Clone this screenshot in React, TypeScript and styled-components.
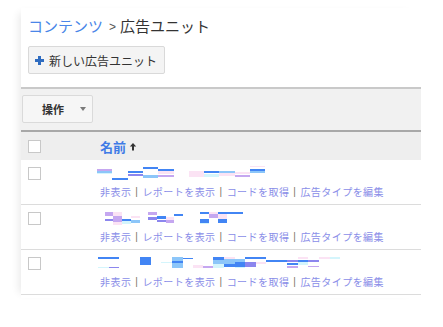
import React from "react";
import styled, { createGlobalStyle } from "styled-components";

const GlobalStyle = createGlobalStyle`
  body {
    margin: 0;
    background: #ffffff;
    font-family: "Noto Sans CJK JP", "Noto Sans", sans-serif;
  }
`;

const Page = styled.div`
  padding: 8px 22px 30px 21px;
`;
const Panel = styled.div`
  background: #ffffff;
  box-shadow: -7px 0 8px -5px rgba(0, 0, 0, 0.09);
  padding-bottom: 3px;
`;
const Top = styled.div`
  padding: 8px 7px 0;
`;
const Breadcrumb = styled.div`
  display: flex;
  align-items: center;
  height: 20px;
  font-size: 15px;
  line-height: 20px;
  color: #333333;
`;
const CrumbLink = styled.a`
  color: #4a86e8;
  text-decoration: none;
`;
const CrumbSep = styled.span`
  font-family: "Liberation Sans", sans-serif;
  font-size: 12px;
  color: #555555;
  margin: 1px 4px 0 6px;
`;
const NewButton = styled.button`
  display: flex;
  align-items: center;
  gap: 5px;
  height: 28px;
  margin-top: 10px;
  padding: 0 7px 0 6px;
  background: #f4f4f4;
  border: 1px solid #d9d9d9;
  border-radius: 2px;
  font-family: inherit;
  font-size: 12px;
  color: #333333;
`;
const Toolbar = styled.div`
  margin-top: 13px;
  height: 35px;
  padding: 6px 1px 0;
  background: #f1f1f1;
  border-top: 2px solid #c9c9c9;
  border-bottom: 2px solid #a8a8a8;
`;
const ActionButton = styled.button`
  display: flex;
  align-items: center;
  width: 71px;
  height: 28px;
  padding: 0 0 0 19px;
  background: #f6f6f6;
  border: 1px solid #dadada;
  border-radius: 2px;
  font-family: inherit;
  font-size: 11px;
  font-weight: bold;
  color: #333333;
`;
const Caret = styled.span`
  margin-left: 16px;
  width: 0;
  height: 0;
  border-left: 3.5px solid transparent;
  border-right: 3.5px solid transparent;
  border-top: 4px solid #7a7a7a;
`;
const Row = styled.div<{ $head?: boolean }>`
  display: grid;
  grid-template-columns: 79px 1fr;
  height: ${(p) => (p.$head ? "28px" : "44px")};
  background: ${(p) => (p.$head ? "#eeeeee" : "#ffffff")};
  border-bottom: ${(p) => (p.$head ? "none" : "1px solid #dcdcdc")};
  align-items: ${(p) => (p.$head ? "center" : "start")};
`;
const CheckCell = styled.div<{ $head?: boolean }>`
  padding: ${(p) => (p.$head ? "0 0 0 7px" : "7px 0 0 7px")};
  display: flex;
`;
const Check = styled.span`
  width: 11px;
  height: 11px;
  border: 1px solid #c8c8c8;
  background: #ffffff;
`;
const HeadName = styled.div`
  display: flex;
  align-items: center;
  gap: 3px;
  font-size: 13px;
  font-weight: bold;
  color: #3f7be6;
`;
const NameCell = styled.div`
  padding-top: 6px;
  margin-left: -3px;
`;
const Links = styled.div`
  display: flex;
  align-items: center;
  margin: 6px 0 0 3px;
  font-size: 10px;
  letter-spacing: 0.45px;
  line-height: 12px;
  color: #8a8ee8;
`;
const LinkSep = styled.span`
  color: #7c7564;
  margin: 0 4px;
  font-family: "Liberation Sans", sans-serif;
`;

type Seg = [number, number, number, number, string];

const B = "#4285f4";
const LB = "#8cc6f9";
const P = "#fbe3f4";
const V = "#c5a7f0";
const C = "#d4f5fc";
const M = "#8c86ee";

// redacted unit names: blocks of colour, one list per row
const rows: Seg[][] = [
  [
    [0, 3, 15, 2, V], [0, 5, 15, 2, LB], [0, 7, 15, 1, C],
    [15, 12, 16, 2, B],
    [31, 5, 15, 2, B], [31, 8, 15, 2, M],
    [46, 1, 15, 2, B], [46, 9, 15, 3, LB],
    [61, 3, 16, 2, B], [61, 5, 16, 3, P], [61, 9, 16, 2, V],
    [92, 5, 15, 6, P],
    [107, 5, 15, 2, B], [107, 8, 15, 3, C],
    [122, 5, 16, 2, LB], [122, 7, 16, 3, P],
    [138, 6, 15, 2, P], [138, 9, 15, 2, V],
    [153, 0, 15, 1, P], [153, 3, 15, 2, B], [153, 5, 15, 2, LB],
  ],
  [
    [8, 1, 8, 4, V], [8, 8, 8, 2, M],
    [16, 1, 9, 4, P], [16, 5, 9, 6, V], [16, 11, 9, 3, P],
    [25, 8, 9, 2, B], [25, 10, 9, 3, C],
    [34, 5, 9, 2, P], [34, 9, 9, 3, LB],
    [51, 1, 9, 3, V], [51, 6, 9, 3, M],
    [60, 5, 9, 3, B], [60, 9, 9, 2, M],
    [69, 6, 8, 3, P], [69, 9, 8, 3, V],
    [77, 3, 9, 2, B],
    [103, 1, 43, 2, B], [112, 1, 9, 2, P],
    [103, 8, 9, 4, B], [103, 12, 9, 1, C],
    [112, 3, 9, 4, V],
    [121, 3, 9, 9, P], [121, 8, 9, 4, B],
  ],
  [
    [1, 1, 21, 2, B], [1, 11, 11, 1, C], [12, 11, 10, 1, M],
    [43, 1, 11, 8, B],
    [64, 6, 11, 1, C],
    [75, 1, 11, 4, LB], [75, 5, 11, 2, B], [75, 7, 11, 5, LB], [86, 2, 10, 1, B],
    [96, 9, 10, 3, P], [106, 10, 10, 2, V],
    [116, 1, 11, 3, B], [116, 4, 11, 4, LB], [116, 8, 11, 4, C],
    [127, 1, 11, 3, P], [127, 3, 11, 5, LB], [127, 8, 11, 3, B],
    [138, 3, 10, 3, LB], [138, 6, 10, 5, B], [138, 11, 10, 1, C],
    [148, 1, 21, 2, B], [148, 6, 11, 5, M], [159, 6, 10, 2, P],
    [169, 4, 21, 2, B],
    [190, 4, 11, 2, M], [190, 7, 11, 2, B], [190, 10, 11, 2, V],
    [201, 1, 10, 2, P], [201, 4, 10, 2, B], [201, 6, 10, 3, C],
    [211, 4, 11, 2, M], [211, 10, 11, 1, V],
    [222, 1, 11, 2, P],
    [233, 1, 10, 2, C],
  ],
];

const PlusIcon = () => (
  <svg width="9" height="9" viewBox="0 0 9 9">
    <rect x="3" y="0" width="3" height="9" fill="#2f6cc0" />
    <rect x="0" y="3" width="9" height="3" fill="#2f6cc0" />
  </svg>
);

const UpArrow = () => (
  <svg width="8" height="9" viewBox="0 0 8 9">
    <path d="M4 1 L0.8 4.4 H3 V8.5 H5 V4.4 H7.2 Z" fill="#333333" />
  </svg>
);

const Stripes = ({ segs }: { segs: Seg[] }) => (
  <svg width="260" height="14" viewBox="0 0 260 14" style={{ display: "block" }}>
    {segs.map(([x, y, w, h, c], i) => (
      <rect key={i} x={x} y={y} width={w} height={h} fill={c} />
    ))}
  </svg>
);

const actions = ["非表示", "レポートを表示", "コードを取得", "広告タイプを編集"];

export default function App() {
  return (
    <>
      <GlobalStyle />
      <Page>
        <Panel>
          <Top>
            <Breadcrumb>
              <CrumbLink href="#">コンテンツ</CrumbLink>
              <CrumbSep>&gt;</CrumbSep>
              <span>広告ユニット</span>
            </Breadcrumb>
            <NewButton>
              <PlusIcon />
              新しい広告ユニット
            </NewButton>
          </Top>
          <Toolbar>
            <ActionButton>
              操作
              <Caret />
            </ActionButton>
          </Toolbar>
          <Row $head>
            <CheckCell $head>
              <Check />
            </CheckCell>
            <HeadName>
              名前
              <UpArrow />
            </HeadName>
          </Row>
          {rows.map((segs, i) => (
            <Row key={i}>
              <CheckCell>
                <Check />
              </CheckCell>
              <NameCell>
                <Stripes segs={segs} />
                <Links>
                  {actions.map((a, j) => (
                    <React.Fragment key={a}>
                      {j > 0 && <LinkSep>|</LinkSep>}
                      <span>{a}</span>
                    </React.Fragment>
                  ))}
                </Links>
              </NameCell>
            </Row>
          ))}
        </Panel>
      </Page>
    </>
  );
}
